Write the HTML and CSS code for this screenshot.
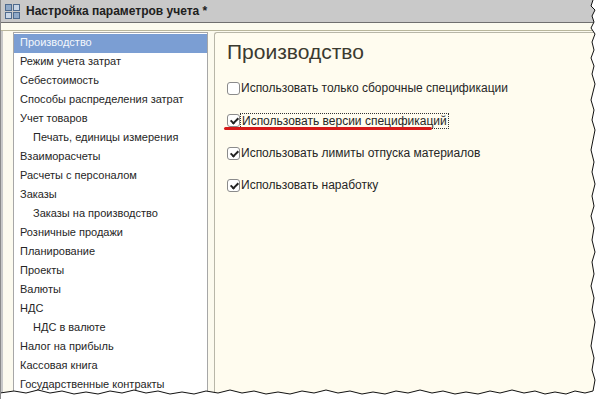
FILE: index.html
```html
<!DOCTYPE html>
<html lang="ru">
<head>
    <meta charset="UTF-8">
    <title>Настройка параметров учета</title>
    <link rel="stylesheet" href="styles.css">
</head>
<body>
<div class="window">
    <div class="titlebar">
        <svg class="appicon" width="16" height="15" viewBox="0 0 16 15">
            <rect x="0.5" y="0.5" width="6" height="6" fill="#8fa9c8" stroke="#4f6b8e"/>
            <rect x="8.5" y="0.5" width="6" height="6" fill="#c9d6e6" stroke="#4f6b8e"/>
            <rect x="0.5" y="8.5" width="6" height="6" fill="#c9d6e6" stroke="#4f6b8e"/>
            <rect x="8.5" y="8.5" width="6" height="6" fill="#8fa9c8" stroke="#4f6b8e"/>
        </svg>
        <span class="title">Настройка параметров учета *</span>
    </div>
    <div class="toolbar"></div>
    <div class="body">
        <ul class="sections">
            <li class="active">Производство</li>
            <li>Режим учета затрат</li>
            <li>Себестоимость</li>
            <li>Способы распределения затрат</li>
            <li>Учет товаров</li>
            <li class="sub">Печать, единицы измерения</li>
            <li>Взаиморасчеты</li>
            <li>Расчеты с персоналом</li>
            <li>Заказы</li>
            <li class="sub">Заказы на производство</li>
            <li>Розничные продажи</li>
            <li>Планирование</li>
            <li>Проекты</li>
            <li>Валюты</li>
            <li>НДС</li>
            <li class="sub">НДС в валюте</li>
            <li>Налог на прибыль</li>
            <li>Кассовая книга</li>
            <li>Государственные контракты</li>
        </ul>
        <div class="page">
            <h1>Производство</h1>
            <label class="option"><span class="box"></span><span class="text">Использовать только сборочные спецификации</span></label>
            <label class="option marked"><span class="box checked"></span><span class="text focus">Использовать версии спецификаций</span></label>
            <label class="option"><span class="box checked"></span><span class="text">Использовать лимиты отпуска материалов</span></label>
            <label class="option"><span class="box checked"></span><span class="text">Использовать наработку</span></label>
        </div>
    </div>
    <svg class="torn" width="600" height="399" viewBox="0 0 600 399">
        <path fill="#fff" d="M593,0 L591,6 L595,10 L592,16 L594,22 L591,28 L595,34 L592,42 L594,50 L591,58 L594,66 L592,74 L595,84 L593,92 L591,100 L594,110 L592,120 L595,130 L593,140 L591,150 L594,162 L592,172 L595,184 L592,196 L594,206 L591,216 L594,228 L592,240 L595,252 L592,262 L594,274 L591,286 L594,298 L592,310 L595,322 L593,334 L591,346 L594,358 L592,370 L595,380 L593,391 L585,393 L575,391 L566,394 L555,392 L545,394 L535,391 L524,393 L512,390 L500,393 L490,391 L478,394 L466,392 L455,394 L443,391 L432,393 L420,390 L408,393 L396,391 L385,394 L373,392 L362,394 L350,391 L338,393 L326,390 L314,393 L302,391 L290,394 L278,392 L266,394 L254,391 L242,393 L230,390 L218,393 L206,391 L194,394 L182,392 L170,394 L158,391 L146,393 L134,390 L122,393 L110,391 L98,394 L86,392 L74,394 L62,391 L50,393 L38,390 L26,393 L14,391 L0,393 L0,399 L600,399 L600,0 Z"/>
        <path fill="none" stroke="#111" stroke-width="1" d="M593,0 L591,6 L595,10 L592,16 L594,22 L591,28 L595,34 L592,42 L594,50 L591,58 L594,66 L592,74 L595,84 L593,92 L591,100 L594,110 L592,120 L595,130 L593,140 L591,150 L594,162 L592,172 L595,184 L592,196 L594,206 L591,216 L594,228 L592,240 L595,252 L592,262 L594,274 L591,286 L594,298 L592,310 L595,322 L593,334 L591,346 L594,358 L592,370 L595,380 L593,391 L585,393 L575,391 L566,394 L555,392 L545,394 L535,391 L524,393 L512,390 L500,393 L490,391 L478,394 L466,392 L455,394 L443,391 L432,393 L420,390 L408,393 L396,391 L385,394 L373,392 L362,394 L350,391 L338,393 L326,390 L314,393 L302,391 L290,394 L278,392 L266,394 L254,391 L242,393 L230,390 L218,393 L206,391 L194,394 L182,392 L170,394 L158,391 L146,393 L134,390 L122,393 L110,391 L98,394 L86,392 L74,394 L62,391 L50,393 L38,390 L26,393 L14,391 L0,393"/>
    </svg>
</div>
</body>
</html>
```

FILE: styles.css
```css
*{
    margin: 0px;
    padding: 0px;
    list-style: none;
    box-sizing: border-box;
}
body{
    background-color: #fff;
    font-family: "Liberation Sans", Arial, sans-serif;
    font-size: 12px;
    color: #1e1e1e;
}
.window{
    position: relative;
    width: 600px;
    height: 399px;
    overflow: hidden;
    background-color: #fcfaee;
    border-left: 1px solid #8a8a8a;
}
.titlebar{
    display: flex;
    align-items: center;
    gap: 5px;
    height: 23px;
    padding-left: 4px;
    background-color: #c9c9c9;
    border-bottom: 1px solid #6f6f6f;
}
.title{
    font-weight: bold;
    font-size: 12px;
    color: #202020;
}
.toolbar{
    height: 8px;
    background-color: #fcfbef;
    border-bottom: 1px solid #b9b69c;
}
.body{
    display: flex;
    gap: 6px;
    height: 368px;
    padding: 1px 0px 0px 10px;
    border-left: 2px solid #c8c8c8;
}
.sections{
    width: 195px;
    background-color: #fff;
    border: 1px solid #a7a7a7;
    border-bottom: none;
    padding-top: 1px;
    font-size: 11px;
    color: #262626;
}
.sections li{
    height: 19px;
    line-height: 17px;
    padding-left: 6px;
    white-space: nowrap;
}
.sections .sub{
    padding-left: 19px;
}
.sections .active{
    background-color: #7b9ed3;
    color: #f4f7fc;
}
.page{
    flex: 1;
    background-color: #fffcef;
    border: 1px solid #b8b6a8;
    border-right: none;
    border-bottom: none;
    border-radius: 3px 0px 0px 0px;
    padding: 4px 0px 0px 12px;
}
.page h1{
    font-weight: normal;
    font-size: 21px;
    color: #3b3a30;
    height: 35px;
    line-height: 30px;
}
.option{
    display: flex;
    align-items: center;
    gap: 1px;
    height: 32px;
    white-space: nowrap;
    font-size: 12px;
    color: #262626;
}
.option.marked{
    height: 33px;
    position: relative;
}
.option.marked::after{
    content: "";
    position: absolute;
    left: -3px;
    top: 23px;
    width: 208px;
    height: 3px;
    background-color: #d61a1a;
    border-radius: 2px;
}
.box{
    width: 13px;
    height: 13px;
    border: 1px solid #8b8b8b;
    border-radius: 3px;
    background-color: #fff;
    position: relative;
}
.box.checked::after{
    content: "";
    position: absolute;
    left: 4px;
    top: 1px;
    width: 3px;
    height: 6px;
    border: solid #222;
    border-width: 0px 2px 2px 0px;
    transform: rotate(45deg);
}
.text.focus{
    outline: 1px dotted #333;
    padding: 0px 1px;
}
.torn{
    position: absolute;
    left: -1px;
    top: 0px;
}
```
